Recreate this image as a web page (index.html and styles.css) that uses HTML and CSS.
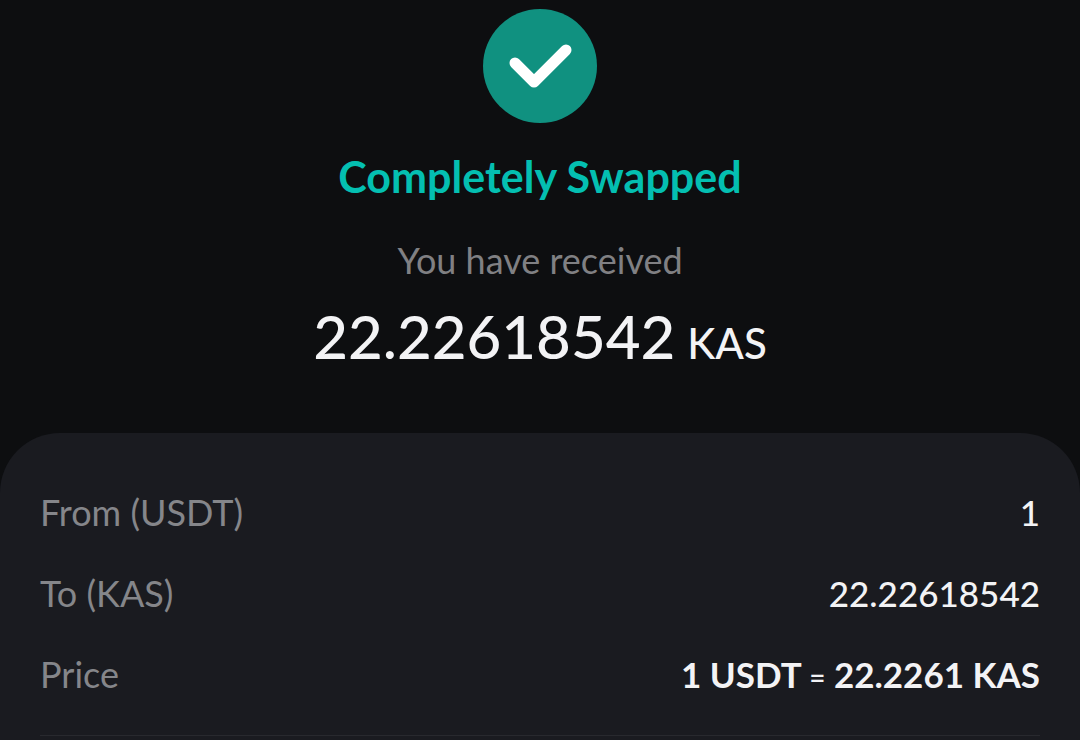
FILE: index.html
```html
<!DOCTYPE html>
<html lang="en">
<head>
  <meta charset="utf-8">
  <meta name="viewport" content="width=device-width, initial-scale=1">
  <title>Completely Swapped</title>
  <link rel="stylesheet" href="styles.css">
</head>
<body>
  <main class="swap">
    <header class="summary">
      <svg class="status-icon" viewBox="0 0 114 114" aria-hidden="true">
        <circle cx="57" cy="57" r="57" fill="#109180"/>
        <path d="M32 54 L51 73 L83 41" fill="none" stroke="#ffffff" stroke-width="11" stroke-linecap="round" stroke-linejoin="round"/>
      </svg>
      <h1 class="status">Completely Swapped</h1>
      <p class="caption">You have received</p>
      <p class="amount"><span>22.22618542</span> <span class="unit">KAS</span></p>
    </header>

    <section class="details">
      <dl class="rows">
        <div class="row">
          <dt>From (USDT)</dt>
          <dd>1</dd>
        </div>
        <div class="row">
          <dt>To (KAS)</dt>
          <dd>22.22618542</dd>
        </div>
        <div class="row">
          <dt>Price</dt>
          <dd class="price">1 USDT <span class="equals">=</span> 22.2261 KAS</dd>
        </div>
      </dl>
    </section>
  </main>
</body>
</html>
```
FILE: styles.css
```css
* {
  box-sizing: border-box;
}

body {
  margin: 0;
  background-color: #0d0e10;
  color: #f3f3f5;
  font-family: "Lato", "Open Sans", sans-serif;
}

.swap {
  display: flex;
  flex-direction: column;
  min-height: 100vh;
}

.summary {
  display: flex;
  flex-direction: column;
  align-items: center;
  padding: 9px 40px 56px;
}

.status-icon {
  width: 114px;
  height: 114px;
}

.status {
  margin: 29px 0 0;
  color: #04bfb1;
  font-size: 43px;
  line-height: 50px;
}

.caption {
  margin: 36px 0 0;
  color: #808083;
  font-size: 36px;
  line-height: 44px;
}

.amount {
  display: flex;
  align-items: baseline;
  gap: 12px;
  margin: 20px 0 0;
  font-size: 60px;
  font-weight: 500;
  line-height: 68px;
}

.unit {
  font-size: 42px;
}

.details {
  flex: 1;
  padding: 39px 40px 0;
  background-color: #1a1b20;
  border-radius: 60px 60px 0 0;
}

.rows {
  margin: 0;
  padding-bottom: 20px;
  border-bottom: 1px solid #28292e;
}

.row {
  display: flex;
  justify-content: space-between;
  font-size: 36px;
  line-height: 81px;
}

.row dt {
  color: #85868a;
}

.row dd {
  margin: 0;
  font-size: 35px;
  font-weight: 500;
}

.row .price {
  font-weight: bold;
}

.equals {
  font-size: 28px;
  font-weight: 500;
  line-height: 1;
}
```
